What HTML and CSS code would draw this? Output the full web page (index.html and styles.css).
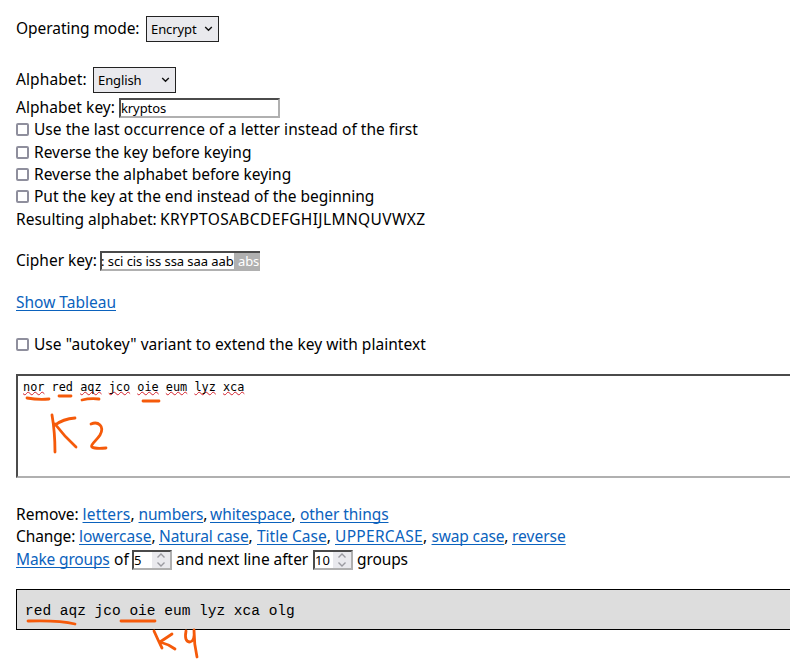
FILE: index.html
```
<!DOCTYPE html>
<html lang="en">
<head>
<meta charset="utf-8">
<title>Keyed cipher</title>
<link rel="stylesheet" href="styles.css">
</head>
<body>
<main>
  <div class="row mode"><span class="t w-mode">Operating mode:</span><span class="select s-mode">Encrypt<svg width="9" height="6" viewBox="0 0 9 6"><path d="M1.2 1l3.3 3.3L7.800 1"/></svg></span></div>
  <div class="row alpha"><span class="t w-alpha">Alphabet:</span><span class="select s-alpha">English<svg width="9" height="6" viewBox="0 0 9 6"><path d="M1.2 1l3.3 3.3L7.800 1"/></svg></span></div>
  <div class="row key"><span class="t w-key">Alphabet key:</span><span class="field">kryptos</span></div>
  <label class="row c1"><i class="box"></i><span class="t">Use the last occurrence of a letter instead of the first</span></label>
  <label class="row c2"><i class="box"></i><span class="t">Reverse the key before keying</span></label>
  <label class="row c3"><i class="box"></i><span class="t">Reverse the alphabet before keying</span></label>
  <label class="row c4"><i class="box"></i><span class="t">Put the key at the end instead of the beginning</span></label>
  <div class="row result"><span class="t w-res">Resulting alphabet:</span><span class="t caps">KRYPTOSABCDEFGHIJLMNQUVWXZ</span></div>
  <div class="row cipher"><span class="t w-cipher">Cipher key:</span><span class="field scrolled"><span class="clip">: sci cis iss ssa saa aab</span><mark>abs</mark></span></div>
  <div class="row tableau"><a class="t">Show Tableau</a></div>
  <label class="row auto"><i class="box"></i><span class="t">Use "autokey" variant to extend the key with plaintext</span></label>

  <div class="input-area"><u>nor</u> red <u>aqz</u> <u>jco</u> <u>oie</u> <u>eum</u> <u>lyz</u> <u>xca</u></div>

  <div class="row remove"><span class="t w-remove">Remove:</span><span class="t l1"><a>letters</a>,</span><span class="t l2"><a>numbers</a>,</span><span class="t l3"><a>whitespace</a>,</span><a class="t">other things</a></div>
  <div class="row change"><span class="t w-change">Change:</span><span class="t m1"><a>lowercase</a>,</span><span class="t m2"><a>Natural case</a>,</span><span class="t m3"><a>Title Case</a>,</span><span class="t m4"><a>UPPERCASE</a>,</span><span class="t m5"><a>swap case</a>,</span><a class="t">reverse</a></div>
  <div class="row groups"><a class="t g0">Make groups</a><span class="t g1">of</span><span class="num">5<b><svg width="10" height="14" viewBox="0 0 10 14"><path d="M1.500 4.500L5 1l3.500 3.500M1.500 9.500L5 13l3.500-3.500"/></svg></b></span><span class="t g2">and next line after</span><span class="num">10<b><svg width="10" height="14" viewBox="0 0 10 14"><path d="M1.500 4.500L5 1l3.500 3.500M1.500 9.500L5 13l3.500-3.500"/></svg></b></span><span class="t g3">groups</span></div>

  <div class="output">red aqz jco oie eum lyz xca olg</div>
</main>
<svg class="ink" width="790" height="659" viewBox="0 0 790 659">
  <path d="M27 398Q38 400 49 399M59 396H71M82 400Q90 398 99 399M143 401H159"/>
  <path d="M52 415Q55 432 55 452M55 425Q63 419 75 418M55 424Q64 436 76 447"/>
  <path d="M91 424C98 421 105 426 100 435C97 440 90 445 92 447Q95 449 106 448"/>
  <path d="M28 621Q59 620 75 624M121 621H155M154 631Q158 640 162 648M172 634L160 642Q168 644 175 649M186 631Q184 642 190 642Q195 641 194 630Q194 644 197 657"/>
</svg>
</body>
</html>
```

FILE: styles.css
```
body { margin: 0; background: #fff; color: #000; font: 15.5px/22px "Noto Sans", sans-serif; height: 659px; overflow: hidden; }
main { padding: 16px 0 0 16px; }
.row { display: flex; align-items: center; height: 22px; white-space: nowrap; }
.t { flex: none; position: relative; top: -1px; }
a { color: #0b62bd; text-decoration: underline; text-decoration-thickness: 1px; text-underline-offset: 2px; text-decoration-skip-ink: none; }
.mode { height: 26px; }
.alpha { height: 26px; margin-top: 25px; }
.key { margin-top: 4px; }
.c1 .t { letter-spacing: 0.04px; }
.c4 .t { letter-spacing: -0.03px; }
.auto .t { letter-spacing: 0.04px; }
.c2, .result { margin-top: 1px; }
.cipher { margin-top: 19px; }
.tableau, .auto { margin-top: 20px; }
.w-mode { width: 130px; letter-spacing: -0.05px; }
.w-alpha { width: 77px; letter-spacing: 0.1px; }
.w-key { width: 103px; letter-spacing: 0.05px; }
.w-res { width: 144px; }
.caps { letter-spacing: 0.39px; }
.w-cipher { width: 84px; }
.select { box-sizing: border-box; height: 26px; border: 1px solid #222; background: #e9e9ed; display: flex; justify-content: space-between; align-items: center; padding: 0 5px 0 4px; font-size: 13px; letter-spacing: -0.1px; }
.s-mode { width: 73px; }
.s-alpha { width: 83px; }
svg { fill: none; stroke: #111; stroke-width: 1.4; }
.field { box-sizing: border-box; width: 161px; height: 20px; border: 2px solid; border-color: #4b4b4b #b0b0b0 #b0b0b0 #4b4b4b; font-size: 13px; line-height: 16px; letter-spacing: -0.1px; }
.scrolled { width: 160px; display: flex; border-right: 0; }
.clip { width: 133px; flex: none; margin-left: -1px; letter-spacing: -0.07px; }
mark { flex: 1; background: #b0b0b0; color: #fff; padding-left: 4px; }
.box { box-sizing: border-box; width: 13px; height: 13px; border: 2px solid #8f8f9d; border-radius: 2px; margin: 0 5px 1px 0; flex: none; }
.input-area { box-sizing: border-box; height: 104px; margin-top: 18px; border: 2px solid #4b4b4b; border-bottom-color: #b0b0b0; border-right: 0; padding: 4px 5px; font: 11.87px/14px "DejaVu Sans Mono", monospace; }
u { text-decoration: underline wavy #d3202b 1px; text-underline-offset: 0; text-decoration-skip-ink: none; }
.remove { margin-top: 26px; }
.w-remove { width: 66.5px; }
.l1 { width: 56px; letter-spacing: 0.2px; }
.l2 { width: 71.5px; letter-spacing: -0.15px; }
.l3 { width: 90px; letter-spacing: -0.05px; }
.remove > a { letter-spacing: -0.08px; }
.w-change { width: 63px; letter-spacing: -0.12px; }
.m1 { width: 80px; }
.m2 { width: 98px; letter-spacing: -0.1px; }
.m3 { width: 78px; }
.m4 { width: 96.5px; letter-spacing: 0.3px; }
.m5 { width: 80.5px; letter-spacing: -0.15px; }
.groups { margin-top: 1px; }
.g0 { width: 93px; letter-spacing: -0.16px; }
.g1 { margin-left: 5px; width: 18px; }
.g2 { margin-left: 4px; width: 137px; letter-spacing: -0.03px; }
.g3 { margin-left: 4px; letter-spacing: -0.1px; }
.num { box-sizing: border-box; width: 40px; height: 20px; border: 2px solid; border-color: #4b4b4b #b0b0b0 #b0b0b0 #4b4b4b; font-size: 13px; line-height: 16px; display: flex; justify-content: space-between; }
.num b { width: 18px; background: #e9e9ed; display: flex; align-items: center; justify-content: center; }
.num svg { stroke: #9a9aa0; }
.output { box-sizing: border-box; height: 41px; margin-top: 18px; border: 1px solid #000; border-right: 0; background: #ddd; padding: 0 8px; font: 14.500px/42px "Liberation Mono", monospace; }
.ink { position: absolute; left: 0; top: 0; pointer-events: none; }
.ink path { stroke: #f55a0a; stroke-width: 2.8; stroke-linecap: round; stroke-linejoin: round; }
```
